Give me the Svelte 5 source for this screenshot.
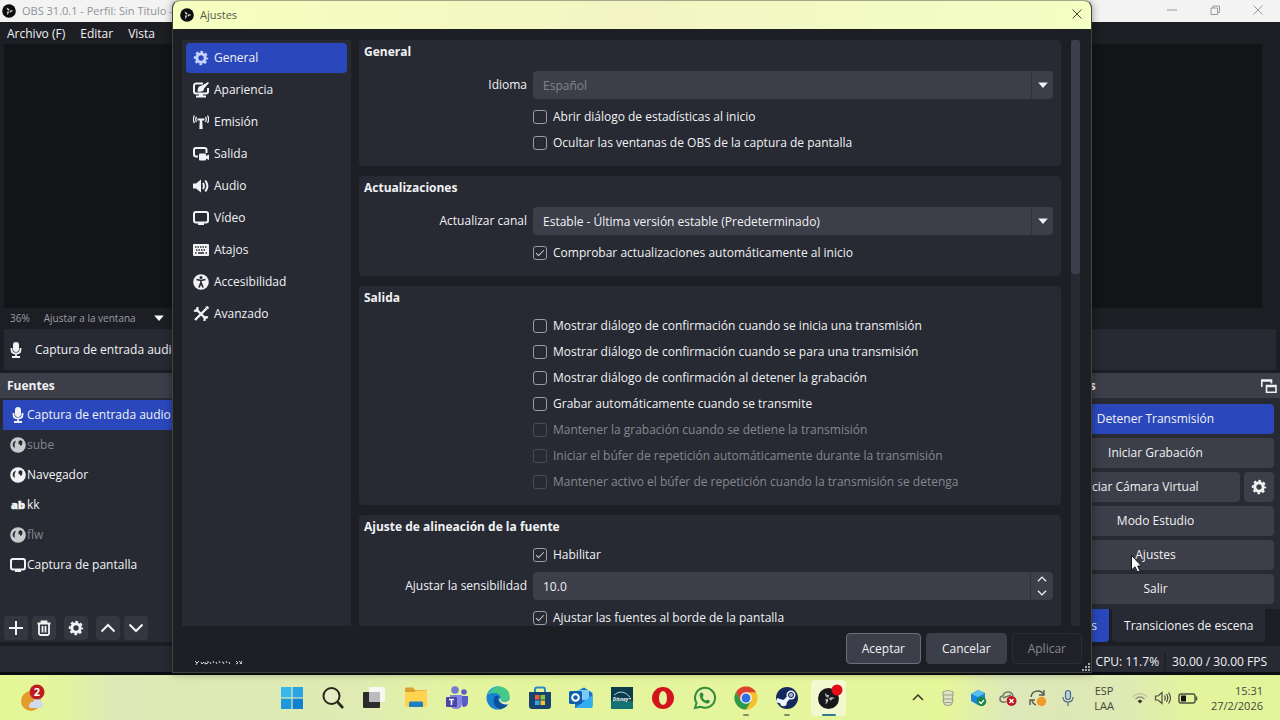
<script lang="ts">
type Source = { name: string; icon: string; hidden?: boolean; selected?: boolean };
type Check = { label: string; checked?: boolean; disabled?: boolean };

const sections = [
  { label: 'General', icon: 'gear' },
  { label: 'Apariencia', icon: 'appearance' },
  { label: 'Emisión', icon: 'antenna' },
  { label: 'Salida', icon: 'output' },
  { label: 'Audio', icon: 'audio' },
  { label: 'Vídeo', icon: 'monitor' },
  { label: 'Atajos', icon: 'keyboard' },
  { label: 'Accesibilidad', icon: 'access' },
  { label: 'Avanzado', icon: 'tools' },
];

const sources: Source[] = [
  { name: 'Captura de entrada audio', icon: 'mic', selected: true },
  { name: 'sube', icon: 'globe', hidden: true },
  { name: 'Navegador', icon: 'globe' },
  { name: 'kk', icon: 'text' },
  { name: 'flw', icon: 'globe', hidden: true },
  { name: 'Captura de pantalla', icon: 'monitor' },
];

const generalChecks: Check[] = [
  { label: 'Abrir diálogo de estadísticas al inicio' },
  { label: 'Ocultar las ventanas de OBS de la captura de pantalla' },
];

const outputChecks: Check[] = [
  { label: 'Mostrar diálogo de confirmación cuando se inicia una transmisión' },
  { label: 'Mostrar diálogo de confirmación cuando se para una transmisión' },
  { label: 'Mostrar diálogo de confirmación al detener la grabación' },
  { label: 'Grabar automáticamente cuando se transmite' },
  { label: 'Mantener la grabación cuando se detiene la transmisión', disabled: true },
  { label: 'Iniciar el búfer de repetición automáticamente durante la transmisión', disabled: true },
  { label: 'Mantener activo el búfer de repetición cuando la transmisión se detenga', disabled: true },
];

const apps = [
  'start', 'search', 'taskview', 'explorer', 'teams', 'edge', 'store',
  'outlook', 'disney', 'opera', 'whatsapp', 'chrome', 'steam', 'obs',
];

let active = $state('General');
let sensitivity = $state('10.0');
</script>

{#snippet icon(name: string)}
	<svg class="icon" viewBox="0 0 16 16" aria-hidden="true">
		{#if name === 'gear'}
			<circle cx="8" cy="8" r="4.2" fill="none" stroke="currentColor" stroke-width="3" />
			<circle cx="8" cy="8" r="6.2" fill="none" stroke="currentColor" stroke-width="2" stroke-dasharray="2.6 2.27" stroke-dashoffset="1.3" />
		{:else if name === 'appearance'}
			<path d="M10 1.500H3A2 2 0 0 0 1 3.500V9.500A2 2 0 0 0 3 11.500H13A2 2 0 0 0 15 9.500V6" fill="none" stroke="currentColor" stroke-width="2" />
			<path d="M3 13.500H13V15.500H3Z M6 11H10V14H6Z" fill="currentColor" />
			<path d="M15 0L9 3.500Q4.500 3.500 4.500 9.500Q11 10.500 11 6.500L16 1Z" fill="currentColor" />
		{:else if name === 'antenna'}
			<path d="M4.500 4.500H11.500V6.500H9.200L9.700 15H6.300L6.800 6.500H4.500Z" fill="currentColor" />
			<path d="M3.500 3Q2 5 3.500 8M1.500 1.500Q-.8 5 1.500 9M12.500 3Q14 5 12.500 8M14.500 1.500Q16.800 5 14.500 9" fill="none" stroke="currentColor" stroke-width="1.300" />
		{:else if name === 'output'}
			<path d="M5 10.500H3Q1 10.500 1 8.500V4Q1 2 3 2H11.500Q13.500 2 13.500 4V7" fill="none" stroke="currentColor" stroke-width="2" />
			<path d="M7 7.500H12Q13 7.500 13 8.500V10L16 8.500V14L13 12.500V13.500Q13 14.500 12 14.500H7Q6 14.500 6 13.500V8.500Q6 7.500 7 7.500Z" fill="currentColor" />
		{:else if name === 'audio'}
			<path d="M0 5.500H3L8 1.500V14.500L3 10.500H0Z" fill="currentColor" />
			<path d="M10 5Q11.800 8 10 11M12.300 2.500Q16.500 8 12.300 13.500" fill="none" stroke="currentColor" stroke-width="2" />
		{:else if name === 'monitor'}
			<rect x="1" y="2" width="14" height="10.500" rx="2" fill="none" stroke="currentColor" stroke-width="2" />
			<rect x="5" y="13" width="6" height="2" fill="currentColor" />
		{:else if name === 'keyboard'}
			<rect x="0" y="2" width="16" height="12" rx="1" fill="currentColor" />
			<path d="M2 5H14M3 8H13" stroke="#272a33" stroke-width="1.400" stroke-dasharray="1.500 1" />
			<path d="M2 11H3.500M5 11H11M12.500 11H14" stroke="#272a33" stroke-width="1.300" />
		{:else if name === 'access'}
			<circle cx="8" cy="8" r="7.800" fill="currentColor" />
			<circle cx="8" cy="3.500" r="1.500" fill="#272a33" />
			<path d="M3.500 5.500L8 6.500L12.500 5.500M8 6V9M8 8.500L6 13.500M8 8.500L10 13.500" fill="none" stroke="#272a33" stroke-width="1.700" />
		{:else if name === 'tools'}
			<path d="M3 3L13 13M13.500 2.500L2 14" stroke="currentColor" stroke-width="2.400" />
			<path d="M1 4.500Q5 6 4.500 1M11.500 15Q11 10 15 11.500" fill="none" stroke="currentColor" stroke-width="2.200" />
			<path d="M12 1L15 3.500L16 1.500L14.500 0Z" fill="currentColor" />
		{:else if name === 'mic'}
			<rect x="5" y="0" width="6" height="10" rx="3" fill="currentColor" />
			<path d="M3.500 6V7.500Q3.500 11.500 8 11.500T12.500 7.500V6M8 11V15M4 15H12" fill="none" stroke="currentColor" stroke-width="1.800" />
		{:else if name === 'globe'}
			<circle cx="8" cy="8" r="7.800" fill="currentColor" />
			<path d="M8.500 4.500L10.500 3L12.500 4.500L12 8L10.500 9L10 7.500L8.500 7ZM2.500 8L3.500 5L6 3.500L5 6L4.500 8L5 11Q3 10 2.500 8Z" fill="#272a33" />
		{:else if name === 'text'}
			<text x="8" y="12" text-anchor="middle" fill="currentColor" stroke="currentColor" stroke-width=".5" font-family="Open Sans, sans-serif" font-size="11" font-weight="800">ab</text>
		{:else if name === 'plus'}
			<path d="M8 1V15M1 8H15" stroke="currentColor" stroke-width="2" />
		{:else if name === 'trash'}
			<path d="M1.500 3.500H14.500M5.500 3V1.500H10.500V3M3 4V13.500Q3 15 4.500 15H11.500Q13 15 13 13.500V4M6.500 6V12.500M9.500 6V12.500" fill="none" stroke="currentColor" stroke-width="1.800" />
		{:else if name === 'up'}
			<path d="M1.500 11.500L8 5L14.500 11.500" fill="none" stroke="currentColor" stroke-width="2" />
		{:else if name === 'down'}
			<path d="M1.500 4.500L8 11L14.500 4.500" fill="none" stroke="currentColor" stroke-width="2" />
		{:else if name === 'caret'}
			<path d="M2.500 5H13.500L8 11.500Z" fill="currentColor" />
		{:else if name === 'float'}
			<path d="M.8 9V2H10.500V5.500M.8 3H10.500M5.500 7.500H15V14.200H5.500ZM5.500 8.500H15" fill="none" stroke="currentColor" stroke-width="1.600" />
		{/if}
	</svg>
{/snippet}

{#snippet blades(color: string)}
	{#each [0, 120, 240] as angle}
		<path d="M8 7.600Q5.200 7 5.400 3.600Q6.400 5.600 8.800 5.600Q8 6.500 8 7.600Z" fill={color} transform="rotate({angle} 8 8)" />
	{/each}
{/snippet}

{#snippet logo()}
	<svg class="logo" viewBox="0 0 16 16" aria-hidden="true">
		<circle cx="8" cy="8" r="7.800" fill="#0c0c0e" />
		{@render blades('#d8d8da')}
	</svg>
{/snippet}

{#snippet check(item: Check)}
	<label class="check" class:disabled={item.disabled}>
		<input type="checkbox" checked={item.checked} disabled={item.disabled} />
		{item.label}
	</label>
{/snippet}

{#snippet app(name: string)}
	<svg class="app-icon" viewBox="0 0 24 24" aria-hidden="true">
		{#if name === 'start'}
			<path d="M1 1H11.400V11.400H1Z" fill="#38b8ea" />
			<path d="M12.600 1H23V11.400H12.600Z" fill="#29a5e4" />
			<path d="M1 12.600H11.400V23H1Z" fill="#1f97dc" />
			<path d="M12.600 12.600H23V23H12.600Z" fill="#127fd0" />
		{:else if name === 'search'}
			<circle cx="10.500" cy="10" r="8" fill="#e8edc8" stroke="#26281e" stroke-width="2" />
			<path d="M16.500 16L22 22" stroke="#26281e" stroke-width="2.600" />
		{:else if name === 'taskview'}
			<rect x="7" y="1" width="16" height="15" rx="1" fill="#f7f8f2" />
			<rect x="1" y="6" width="17" height="16" rx="1" fill="#2c2c2c" />
			<rect x="7" y="6" width="11" height="10" fill="#bbbcc0" />
		{:else if name === 'explorer'}
			<path d="M1 3Q1 1.500 2.500 1.500H9L11 4H22Q23 4 23 5V21H1Z" fill="#d9a02e" />
			<path d="M1 6H10L12 4.500H23V21H1Z" fill="#ffd24f" />
			<path d="M5 21V17Q5 15.500 6.500 15.500H17.500Q19 15.500 19 17V21Z" fill="#1c7fc4" />
		{:else if name === 'teams'}
			<circle cx="10" cy="4" r="3.800" fill="#7478cf" />
			<circle cx="19" cy="6" r="2.800" fill="#5d60c0" />
			<path d="M13 10H23V16Q23 21 18 21Z" fill="#5a5cc6" />
			<path d="M5 9H17V17Q17 23 11 23T5 17Z" fill="#8285e0" />
			<rect x="1" y="11" width="11" height="10" rx="1" fill="#4b45a8" />
			<path d="M4 13.500H9M6.500 13.500V19" stroke="#fff" stroke-width="1.600" />
		{:else if name === 'edge'}
			<circle cx="12" cy="12" r="11.500" fill="#1780cf" />
			<path d="M1 9Q4 .5 12 .5Q23.500 1 23.500 11Q22.500 15.500 17.500 15.500Q14 15 15 12.500Q14 7 8 7Q4 7 1 9Z" fill="#44c989" />
			<path d="M1 9Q4 .5 12 .5Q6 3 1 9Z" fill="#2daee0" />
			<path d="M8 12Q6 20 14 23Q20 22 22.500 18Q16 20 13 16Q11 13 13 10Q9 9 8 12Z" fill="#0e4f99" />
			<path d="M15 12.500Q14 16 18 15.800Q22 16 23.500 13V18L22 18.500Q16 19 13.500 15Q12.500 12 15 12.500Z" fill="#e8f2ac" />
		{:else if name === 'store'}
			<path d="M7 6V3.500Q7 1.500 9 1.500H15Q17 1.500 17 3.500V6" fill="none" stroke="#2a8ac9" stroke-width="2" />
			<path d="M1 6H23V20Q23 23 20 23H4Q1 23 1 20Z" fill="#17436f" />
			<path d="M7 9H11.500V13.500H7Z" fill="#f0583a" />
			<path d="M12.500 9H17V13.500H12.500Z" fill="#8fc43a" />
			<path d="M7 14.500H11.500V19H7Z" fill="#35a6e8" />
			<path d="M12.500 14.500H17V19H12.500Z" fill="#f7c02e" />
		{:else if name === 'outlook'}
			<path d="M6 6L15 1.500L23.500 7V20Q23.500 22 21.500 22H6Z" fill="#1a73c7" />
			<path d="M8 4H20V14H8Z" fill="#7ccbf5" />
			<path d="M6 22L23.500 9V20Q23.500 22 21.500 22Z" fill="#35aef0" />
			<rect x="0" y="5" width="13" height="13" rx="1.500" fill="#0f5fae" />
			<circle cx="6.500" cy="11.500" r="3.300" fill="none" stroke="#fff" stroke-width="2" />
		{:else if name === 'disney'}
			<rect x="1" y="1" width="22" height="22" fill="#0d3a4c" />
			<rect x="1" y="15" width="22" height="8" fill="#167174" />
			<path d="M4 9Q12 2 20 11" fill="none" stroke="#8fdbe0" stroke-width="1" />
			<text x="12" y="15" text-anchor="middle" fill="#eef8fa" font-family="Open Sans, sans-serif" font-size="5" font-style="italic" font-weight="700">Disney+</text>
		{:else if name === 'opera'}
			<path d="M12 1A11 11 0 1 0 12 23A11 11 0 1 0 12 1ZM12 5Q16 6 16 12T12 19Q8 18 8 12T12 5Z" fill="#d4141c" fill-rule="evenodd" />
		{:else if name === 'whatsapp'}
			<path d="M2 22L3.500 17A10 10 0 1 1 7.500 20.700Z" fill="#e8f2ac" stroke="#2f8e38" stroke-width="2" />
			<path d="M8 6.500L10 7L10.500 10L9.500 11.500Q11 14 13 14.500L14.500 13.500L17 15Q16.500 18 13.500 17.500Q7.500 15.500 6.500 9.500Q6.500 7.500 8 6.500Z" fill="#2f8e38" />
		{:else if name === 'chrome'}
			<circle cx="12" cy="12" r="11.500" fill="#f5c12c" />
			<path d="M2 6.250A11.500 11.500 0 0 1 22 6.250H12L7 15Z" fill="#dd3f31" />
			<path d="M2 6.250A11.500 11.500 0 0 0 12 23.500L17 15L7 15Z" fill="#2d9a4a" />
			<circle cx="12" cy="12" r="5.800" fill="#fff" />
			<circle cx="12" cy="12" r="4.500" fill="#2f6fe0" />
		{:else if name === 'steam'}
			<circle cx="12" cy="12" r="11" fill="#13295c" />
			<path d="M1.500 14L9 16.500L15 10" fill="none" stroke="#f3f6ff" stroke-width="4" />
			<circle cx="16" cy="9" r="4.500" fill="#f3f6ff" />
			<circle cx="16" cy="9" r="2.600" fill="#a2b2d0" stroke="#13295c" stroke-width="1" />
			<circle cx="8.500" cy="17" r="3.200" fill="#f3f6ff" />
		{:else if name === 'obs'}
			<circle cx="11.500" cy="12.500" r="10.500" fill="#17171a" />
			<g transform="translate(1 2) scale(1.300)">{@render blades('#b5b5b8')}</g>
			<circle cx="20" cy="4" r="5.500" fill="#e40a17" />
		{/if}
	</svg>
{/snippet}

<div class="desktop">
	<main class="obs">
		<header class="titlebar">
			{@render logo()}
			<span class="grow">OBS 31.0.1 - Perfil: Sin Título -</span>
			<div class="window-buttons">
				<button type="button" aria-label="Minimizar"><svg viewBox="0 0 10 10"><path d="M0 5H10" /></svg></button>
				<button type="button" aria-label="Restaurar"><svg viewBox="0 0 10 10"><path d="M1 3H7.500V9.500H1ZM3 3V1H9.500V7.500H7.500" /></svg></button>
				<button type="button" aria-label="Cerrar"><svg viewBox="0 0 10 10"><path d="M.5 .5L9.500 9.500M9.500 .5L.5 9.500" /></svg></button>
			</div>
		</header>
		<nav class="menu">
			<a href="#archivo">Archivo (F)</a>
			<a href="#editar">Editar</a>
			<a href="#vista">Vista</a>
		</nav>
		<div class="preview"></div>
		<div class="zoom-bar">
			<span>36%</span>
			<button type="button">Ajustar a la ventana {@render icon('caret')}</button>
		</div>
		<div class="context-bar">
			{@render icon('mic')}
			<span>Captura de entrada audio</span>
		</div>

		<div class="docks">
			<section class="dock">
				<h2>Fuentes</h2>
				<ul class="sources">
					{#each sources as source}
						<li class:hidden={source.hidden} class:selected={source.selected}>
							{@render icon(source.icon)}
							<span>{source.name}</span>
						</li>
					{/each}
				</ul>
				<div class="toolbar">
					<button type="button" aria-label="Añadir">{@render icon('plus')}</button>
					<button type="button" aria-label="Eliminar">{@render icon('trash')}</button>
					<button type="button" class="spaced" aria-label="Propiedades">{@render icon('gear')}</button>
					<button type="button" class="spaced" aria-label="Subir">{@render icon('up')}</button>
					<button type="button" aria-label="Bajar">{@render icon('down')}</button>
				</div>
			</section>

			<section class="controls-dock">
				<h2>Controles {@render icon('float')}</h2>
				<div class="controls">
					<button type="button" class="primary">Detener Transmisión</button>
					<button type="button">Iniciar Grabación</button>
					<div class="split">
						<button type="button">Iniciar Cámara Virtual</button>
						<button type="button" aria-label="Configurar cámara">{@render icon('gear')}</button>
					</div>
					<button type="button">Modo Estudio</button>
					<button type="button">Ajustes</button>
					<button type="button">Salir</button>
				</div>
				<div class="tabs">
					<button type="button" class="current">Controles</button>
					<button type="button">Transiciones de escena</button>
				</div>
			</section>
		</div>

		<footer class="status">
			<span>CPU: 11.7%</span>
			<span>30.00 / 30.00 FPS</span>
		</footer>
	</main>

	<div class="dialog" role="dialog" aria-labelledby="dialog-title">
		<header class="dialog-title">
			{@render logo()}
			<span id="dialog-title" class="grow">Ajustes</span>
			<button type="button" aria-label="Cerrar ajustes"><svg viewBox="0 0 10 10"><path d="M.5 .5L9.500 9.500M9.500 .5L.5 9.500" /></svg></button>
		</header>

		<div class="dialog-body">
			<nav class="sections">
				{#each sections as section}
					<button type="button" class:active={active === section.label} onclick={() => (active = section.label)}>
						{@render icon(section.icon)}
						{section.label}
					</button>
				{/each}
			</nav>

			<div class="scroll-area">
				<section class="group">
					<h3>General</h3>
					<div class="field">
						<label for="language">Idioma</label>
						<div class="combo">
							<select id="language" disabled><option>Español</option></select>
							<span class="arrow">{@render icon('caret')}</span>
						</div>
					</div>
					{#each generalChecks as item}
						{@render check(item)}
					{/each}
				</section>

				<section class="group">
					<h3>Actualizaciones</h3>
					<div class="field">
						<label for="channel">Actualizar canal</label>
						<div class="combo">
							<select id="channel"><option>Estable - Última versión estable (Predeterminado)</option></select>
							<span class="arrow">{@render icon('caret')}</span>
						</div>
					</div>
					{@render check({ label: 'Comprobar actualizaciones automáticamente al inicio', checked: true })}
				</section>

				<section class="group">
					<h3>Salida</h3>
					{#each outputChecks as item}
						{@render check(item)}
					{/each}
				</section>

				<section class="group">
					<h3>Ajuste de alineación de la fuente</h3>
					{@render check({ label: 'Habilitar', checked: true })}
					<div class="field">
						<label for="sensitivity">Ajustar la sensibilidad</label>
						<div class="combo">
							<input id="sensitivity" type="text" inputmode="decimal" bind:value={sensitivity} />
							<span class="spin">
								<button type="button" aria-label="Aumentar">{@render icon('up')}</button>
								<button type="button" aria-label="Disminuir">{@render icon('down')}</button>
							</span>
						</div>
					</div>
					{@render check({ label: 'Ajustar las fuentes al borde de la pantalla', checked: true })}
				</section>
			</div>

			<div class="scrollbar"><div class="thumb"></div></div>
		</div>

		<footer class="dialog-footer">
			<svg class="marks" viewBox="0 0 50 6" aria-hidden="true">
				<path d="M1 1L3 3L5 1M3 3L2 5M7 2L8 4L10 2M11 2V4L14 3V1M16 2L17 4M19 1L20 3M22 2L23 4M25 1L26 3M28 2H29L30 4M32 1L33 3M35 2L36 4M42 1L44 3L42 4M45 1L48 4M46 4L48 1" />
			</svg>
			<button type="button" class="accept">Aceptar</button>
			<button type="button">Cancelar</button>
			<button type="button" disabled>Aplicar</button>
			<svg class="grip" viewBox="0 0 9 9" aria-hidden="true"><path d="M6 0H8V2H6ZM3 3H5V5H3ZM6 3H8V5H6ZM0 6H2V8H0ZM3 6H5V8H3ZM6 6H8V8H6Z" /></svg>
		</footer>
	</div>

	<svg class="cursor" viewBox="0 0 11 18" aria-hidden="true">
		<path d="M.5 .5V15L4 11.800L6.500 17L9 16L6.700 11H10.500Z" fill="#fff" stroke="#15151a" stroke-width="1" />
	</svg>

	<footer class="taskbar">
		<button type="button" class="widget" aria-label="Widgets">
			<svg viewBox="0 0 26 28">
				<circle cx="11" cy="17" r="10" fill="#e59a2c" />
				<path d="M9 22Q9 18 13 18Q14 14 18 15Q21 15 21 18Q24 19 23 22Q22 24 20 24H11Q9 24 9 22Z" fill="#cfdcee" />
				<circle cx="17" cy="8" r="7.500" fill="#bd1c20" />
				<text x="17" y="12" text-anchor="middle" fill="#fff" font-family="Open Sans, sans-serif" font-size="11" font-weight="700">2</text>
			</svg>
		</button>
		<span class="space-left"></span>
		<div class="apps">
			{#each apps as name}
				<button type="button" class="app" class:open={name === 'obs'} class:running={name === 'chrome' || name === 'steam'} aria-label={name}>
					{@render app(name)}
				</button>
			{/each}
		</div>
		<span class="space-right"></span>
		<div class="tray">
			<svg viewBox="0 0 18 18"><path d="M4 11L9 6L14 11" fill="none" stroke="#33352a" stroke-width="1.500" /></svg>
			<svg viewBox="0 0 18 18"><path d="M4 3Q9 0 14 3V6L13.500 7V10L14 11L12.500 15.500Q9 17.500 5.500 15.500L4 11L4.500 10V7L4 6ZM5 6H13M5 10H13M6 13.500H12" fill="#dde3c2" stroke="#9da28b" stroke-width="1.200" /></svg>
			<svg viewBox="0 0 18 18"><path d="M2 5L9 1L16 4V11L9 16L2 12Z" fill="#1c86d8" /><path d="M2 5L9 8L16 4L9 1Z" fill="#58bdf0" /><circle cx="12.500" cy="12.500" r="4.700" fill="#178449" /><path d="M10 12.500L12 14.500L15 11" fill="none" stroke="#fff" stroke-width="1.300" /></svg>
			<svg viewBox="0 0 18 18"><path d="M7 13H4Q1 13 1 10T4 7Q5 3 9 3T14 7" fill="none" stroke="#747967" stroke-width="1.500" /><path d="M4 9L12 6" stroke="#747967" stroke-width="1.500" /><circle cx="12.500" cy="12" r="5" fill="#be1724" /><path d="M10.500 10L14.500 14M14.500 10L10.500 14" stroke="#fff" stroke-width="1.400" /></svg>
			<svg viewBox="0 0 18 18"><path d="M2 8Q3 2 9 2Q13 2 15 6M15 1V6H10M7 16Q4 15 3 12M1 16V11H6" fill="none" stroke="#575b4b" stroke-width="1.400" /><circle cx="12.500" cy="12.500" r="4.700" fill="#f29a25" /></svg>
			<svg viewBox="0 0 18 18"><rect x="6.500" y="1.500" width="5" height="9" rx="2.500" fill="#b7cfe0" stroke="#4c6a84" stroke-width="1.200" /><path d="M4 8Q4 13 9 13T14 8M9 13V17" fill="none" stroke="#4c6a84" stroke-width="1.200" /></svg>
			<span class="lang">ESP<br />LAA</span>
			<div class="quick">
				<svg viewBox="0 0 18 18"><path d="M2 8Q9 1 16 8" fill="none" stroke="#c3c9a6" stroke-width="1.400" /><path d="M4.500 10Q9 6 13.500 10" fill="none" stroke="#8d927a" stroke-width="1.400" /><path d="M6.500 12L9 10.500L11.500 12L9 14.500Z" fill="#33352a" /></svg>
				<svg viewBox="0 0 18 18"><path d="M1.500 7H4L8 3.500V14.500L4 11H1.500ZM10.500 6.500Q12 9 10.500 11.500M12.500 5Q15 9 12.500 13M14.500 3.500Q18.500 9 14.500 14.500" fill="none" stroke="#4b4e40" stroke-width="1.200" /></svg>
				<svg class="battery" viewBox="0 0 22 18"><rect x="2" y="5" width="16" height="9" rx="2" fill="none" stroke="#4b4e40" stroke-width="1.400" /><rect x="4" y="6.500" width="5" height="6" fill="#15160f" /><path d="M19.500 7.500V11.500" stroke="#4b4e40" stroke-width="1.500" /></svg>
			</div>
			<span class="clock">15:31<br />27/2/2026</span>
		</div>
	</footer>
</div>

<style>
	:global(body) {
		background: #1d1f24;
	}

	.desktop {
		position: relative;
		display: flex;
		flex-direction: column;
		height: 100vh;
		overflow: hidden;
		background: #1d1e23;
		color: #f2f2f4;
		font: 12px/18px 'Open Sans', sans-serif;
	}

	button,
	select,
	input {
		margin: 0;
		padding: 0;
		border: 0;
		background: none;
		color: inherit;
		font: inherit;
	}

	h2,
	h3,
	ul {
		margin: 0;
		padding: 0;
		font-size: 12px;
		list-style: none;
	}

	.icon,
	.logo {
		flex: none;
		width: 16px;
		height: 16px;
	}

	.grow {
		flex: 1;
	}

	/* Main window */
	.obs {
		flex: 1;
		min-height: 0;
		display: flex;
		flex-direction: column;
		border-bottom: 3px solid #0c0d10;
		white-space: nowrap;
	}

	.titlebar {
		display: flex;
		align-items: center;
		gap: 6px;
		height: 22px;
		padding: 0 1px 0 2px;
		background: #f3f3f4;
		color: #929295;
		font-size: 11px;
	}

	.titlebar .logo,
	.dialog-title .logo {
		width: 14px;
		height: 14px;
	}

	.window-buttons {
		display: flex;
	}

	.window-buttons button {
		width: 43px;
		height: 20px;
	}

	.window-buttons svg,
	.dialog-title button svg {
		width: 10px;
		height: 10px;
		fill: none;
		stroke: #98989b;
	}

	.menu {
		display: flex;
		gap: 15px;
		padding: 3px 7px 0;
		height: 19px;
	}

	.menu a {
		color: inherit;
		text-decoration: none;
	}

	.preview {
		flex: 1;
		margin: 0 18px 0 4px;
		background: #131418;
	}

	.zoom-bar {
		display: flex;
		align-items: center;
		gap: 14px;
		height: 20px;
		padding-left: 10px;
		color: #9c9da3;
		font-size: 10px;
	}

	.zoom-bar button {
		display: flex;
		align-items: center;
		gap: 16px;
	}

	.zoom-bar .icon {
		width: 14px;
		height: 14px;
		color: #fff;
	}

	.context-bar {
		display: flex;
		align-items: center;
		gap: 11px;
		height: 41px;
		margin: 1px 4px 3px;
		padding-left: 4px;
		background: #272a33;
	}

	.docks {
		display: grid;
		grid-template-columns: 1fr 249px;
		gap: 4px;
		height: 268px;
	}

	.dock,
	.controls-dock {
		display: flex;
		flex-direction: column;
	}

	h2 {
		display: flex;
		align-items: center;
		justify-content: space-between;
		height: 25px;
		padding: 0 3px 0 7px;
		background: #3c3e49;
	}

	.dock {
		background: #272a33;
	}

	.sources {
		flex: 1;
		padding: 2px 3px;
	}

	.sources li {
		display: flex;
		align-items: center;
		gap: 1px;
		height: 30px;
		padding-left: 7px;
	}

	.sources .selected {
		background: #2a48bc;
	}

	.sources .hidden .icon {
		opacity: 0.8;
	}

	.sources .hidden span {
		color: #82848d;
	}

	.toolbar {
		display: flex;
		gap: 4px;
		padding: 0 4px 2px;
	}

	.toolbar button {
		display: grid;
		place-items: center;
		width: 24px;
		height: 24px;
		border-radius: 4px;
		background: #343640;
	}

	.toolbar .spaced {
		margin-left: 4px;
	}

	.controls {
		flex: 1;
		display: flex;
		flex-direction: column;
		gap: 4px;
		padding: 6px 6px 5px;
		background: #272a33;
	}

	.controls button {
		height: 30px;
		border-radius: 4px;
		background: #3c3e49;
	}

	.controls .primary {
		background: #2a48bc;
	}

	.split {
		display: grid;
		grid-template-columns: 1fr 30px;
		gap: 4px;
	}

	.split .icon,
	.spin .icon {
		display: block;
		margin: auto;
	}

	.tabs {
		display: flex;
		gap: 3px;
	}

	.tabs button {
		height: 33px;
		padding: 0 12px;
		border-radius: 0 0 4px 4px;
		background: #272a33;
	}

	.tabs .current {
		background: #2a48bc;
	}

	.status {
		display: flex;
		justify-content: flex-end;
		align-items: center;
		height: 20px;
		margin-top: 5px;
		padding: 6px 8px 0 0;
		background: #272a33;
	}

	.status span {
		padding: 0 5px 0 6px;
		border-left: 2px solid #1f2127;
	}

	/* Settings dialog */
	.dialog {
		position: absolute;
		inset: 0 188px 47px 172px;
		display: flex;
		flex-direction: column;
		border: 1px solid #43443e;
		border-top-color: #a4a88a;
		border-radius: 8px 8px 0 0;
		overflow: hidden;
		background: #1d1f24;
		box-sizing: border-box;
		box-shadow: 0 0 8px #0006;
	}

	.dialog-title {
		display: flex;
		align-items: center;
		gap: 6px;
		height: 28px;
		padding: 0 4px 0 7px;
		background: linear-gradient(90deg, #f6ffbf, #f2f5c3 50%, #f4ffc4);
		color: #55574b;
		font-size: 11px;
	}

	.dialog-title button {
		width: 20px;
		height: 20px;
	}

	.dialog-title button svg {
		stroke: #44463c;
	}

	.dialog-body {
		flex: 1;
		min-height: 0;
		display: flex;
		padding: 11px 11px 0 9px;
	}

	.sections {
		display: flex;
		flex-direction: column;
		gap: 2px;
		width: 161px;
		margin-right: 8px;
		padding: 3px 4px;
		background: #272a33;
	}

	.sections button {
		display: flex;
		align-items: center;
		gap: 5px;
		height: 30px;
		padding-left: 7px;
		border-radius: 4px;
	}

	.sections .active {
		background: #2a48bc;
	}

	.sections .active .icon {
		color: #c7d3ff;
	}

	.scroll-area {
		flex: 1;
		display: flex;
		flex-direction: column;
		gap: 10px;
		overflow: hidden;
	}

	.group {
		flex: none;
		padding: 0 8px 10px 5px;
		border-radius: 4px;
		background: #272a33;
	}

	h3 {
		margin-bottom: 3px;
		line-height: 24px;
	}

	.field {
		display: grid;
		grid-template-columns: 168px 1fr;
		gap: 6px;
		align-items: center;
		margin-left: -5px;
		padding: 4px 0 5px;
	}

	.field label {
		text-align: right;
	}

	.combo {
		display: flex;
		height: 28px;
		border-radius: 4px;
		overflow: hidden;
		background: #3c3e49;
	}

	.combo select,
	.combo input {
		flex: 1;
		min-width: 0;
		padding: 1px 10px 0;
		appearance: none;
		opacity: 1;
	}

	.combo select:disabled {
		color: #83858f;
	}

	.arrow {
		display: grid;
		place-items: center;
		width: 21px;
		border-left: 1px solid #30323b;
	}

	.arrow .icon {
		width: 14px;
		height: 14px;
	}

	.spin {
		display: grid;
		width: 22px;
		border-left: 1px solid #30323b;
	}

	.spin .icon {
		width: 10px;
		height: 10px;
	}

	.check {
		display: flex;
		align-items: center;
		gap: 6px;
		height: 26px;
		margin-left: 169px;
	}

	.check input {
		display: grid;
		place-items: center;
		width: 14px;
		height: 14px;
		border: 1px solid #999ba5;
		border-radius: 3px;
		box-sizing: border-box;
		appearance: none;
	}

	.check input:checked::after {
		content: '';
		width: 7px;
		height: 3px;
		margin-bottom: 2px;
		border: solid #c9cad0;
		border-width: 0 0 1px 1px;
		transform: rotate(-45deg);
	}

	.check.disabled {
		color: #85878f;
	}

	.check.disabled input {
		border-color: #4a4c57;
	}

	.scrollbar {
		width: 9px;
		margin-left: 10px;
		background: #272a33;
	}

	.thumb {
		height: 40%;
		border-radius: 3px;
		background: #3c3e49;
	}

	.dialog-footer {
		position: relative;
		display: flex;
		align-items: center;
		justify-content: flex-end;
		gap: 5px;
		padding: 7px 9px 8px 21px;
	}

	.dialog-footer button {
		height: 31px;
		padding: 0 15px;
		border: 1px solid #3c3e49;
		border-radius: 4px;
		background: #3c3e49;
	}

	.dialog-footer .accept {
		border-color: #6a6d7b;
	}

	.dialog-footer button:disabled {
		background: #1f2127;
		border-color: #2c2e36;
		color: #85878f;
	}

	.marks {
		align-self: flex-end;
		width: 50px;
		height: 6px;
		margin: 0 auto -2px 0;
		fill: none;
		stroke: #d5d5d7;
	}

	.grip {
		position: absolute;
		right: 0;
		bottom: 0;
		width: 9px;
		height: 9px;
		fill: #a9aaad;
	}

	.cursor {
		position: absolute;
		top: 555px;
		right: 138px;
		width: 11px;
		height: 18px;
	}

	/* Taskbar */
	.taskbar {
		display: flex;
		align-items: center;
		height: 45px;
		padding: 0 17px 0 20px;
		background: linear-gradient(90deg, #e5f893, #e3f39f 5%, #dde8b6 9%, #dfebb2 28%, #e4f49e 36%, #e6f69b 74%, #dde7b9 79%, #dfe9b4 88%, #e3f49d 93%, #e2f39a);
		color: #44473b;
		font-size: 11px;
	}

	.widget svg {
		display: block;
		width: 26px;
		height: 28px;
	}

	.space-left {
		flex: 15;
	}

	.space-right {
		flex: 4;
	}

	.apps {
		display: grid;
		grid-template-columns: repeat(14, 1fr);
		width: 578px;
	}

	.app {
		position: relative;
		display: grid;
		place-items: center;
		height: 36px;
		border-radius: 4px;
	}

	.app-icon {
		width: 24px;
		height: 24px;
		overflow: visible;
	}

	.app.open {
		margin: 0 3px;
		background: #f3f9cf;
	}

	.app.running::after,
	.app.open::after {
		content: '';
		position: absolute;
		bottom: 0;
		width: 6px;
		height: 2px;
		border-radius: 1px;
		background: #868b66;
	}

	.app.open::after {
		width: 14px;
		background: #2d7e91;
	}

	.tray,
	.quick {
		display: flex;
		align-items: center;
		gap: 12px;
	}

	.quick {
		gap: 5px;
	}

	.tray svg {
		width: 18px;
		height: 18px;
	}

	.tray .battery {
		width: 22px;
	}

	.lang,
	.clock {
		line-height: 15px;
	}

	.lang {
		margin: 0 5px;
		text-align: center;
	}

	.clock {
		text-align: right;
	}
</style>
